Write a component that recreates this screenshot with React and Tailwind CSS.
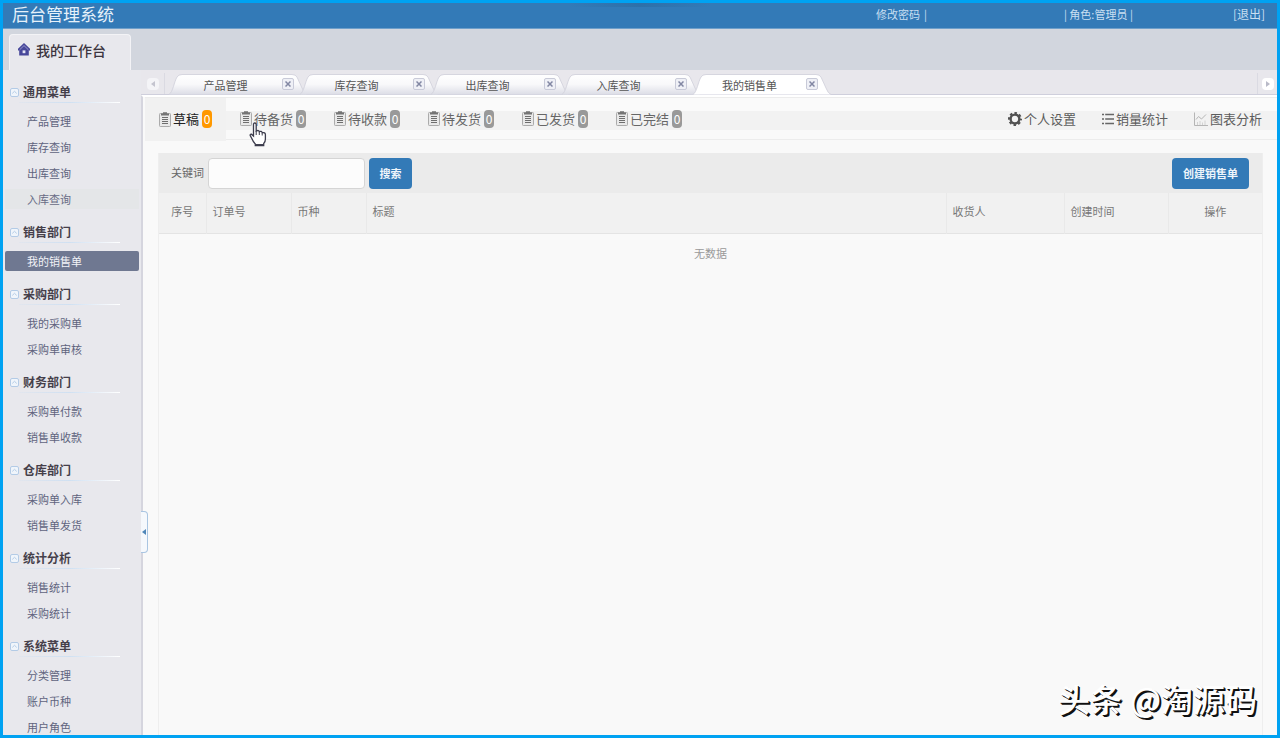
import React from "react";

const MENU = [
  { title: "通用菜单", items: ["产品管理", "库存查询", "出库查询", "入库查询"] },
  { title: "销售部门", items: ["我的销售单"] },
  { title: "采购部门", items: ["我的采购单", "采购单审核"] },
  { title: "财务部门", items: ["采购单付款", "销售单收款"] },
  { title: "仓库部门", items: ["采购单入库", "销售单发货"] },
  { title: "统计分析", items: ["销售统计", "采购统计"] },
  { title: "系统菜单", items: ["分类管理", "账户币种", "用户角色"] },
];
const ACTIVE_ITEM = "我的销售单";
const HOVER_ITEM = "入库查询";

const PAGE_TABS = ["产品管理", "库存查询", "出库查询", "入库查询", "我的销售单"];
const STATUSES = ["草稿", "待备货", "待收款", "待发货", "已发货", "已完结"];

function HomeIcon() {
  return (
    <svg width="12" height="13" viewBox="0 0 12 13" aria-hidden="true">
      <path d="M6 0 L12 5.8 V7.4 H10.8 V12.5 H1.2 V7.4 H0 V5.8 Z" fill="#47479a" />
      <path d="M1.6 6.8 L6 2.6 L10.4 6.8" fill="none" stroke="#a9a9d6" strokeWidth="0.8" />
      <rect x="4.6" y="7.4" width="2.8" height="2.8" fill="#e4e4f4" />
    </svg>
  );
}

function CollapseIcon() {
  return (
    <svg width="9" height="9" viewBox="0 0 9 9" fill="none" stroke="#b3cbe6" aria-hidden="true">
      <rect x="0.5" y="0.5" width="8" height="8" rx="1.5" fill="#f0f5fb" />
      <path d="M2.3 5.4 L4.5 3.3 L6.7 5.4" />
    </svg>
  );
}

function ClipboardIcon() {
  return (
    <svg width="12" height="15" viewBox="0 0 12 15" aria-hidden="true">
      <rect x="0.5" y="1.5" width="11" height="13" rx="0.8" fill="#e9e9e9" stroke="#ababab" />
      <path d="M2 1.5 H4 V0.3 H8 V1.5 H10 V3.6 H2 Z" fill="#747474" />
      <path d="M3 5.5H9M3 7.5H9M3 9.5H9M3 11.5H9" stroke="#6e6e6e" />
    </svg>
  );
}

function GearIcon() {
  return (
    <svg width="14" height="14" viewBox="0 0 14 14" fill="none" stroke="#505050" aria-hidden="true">
      <circle cx="7" cy="7" r="4.4" strokeWidth="2.4" />
      <circle cx="7" cy="7" r="6" strokeWidth="2" strokeDasharray="2.5 2.21" strokeDashoffset="1.25" />
    </svg>
  );
}

function ListIcon() {
  return (
    <svg width="12" height="12" viewBox="0 0 12 12" aria-hidden="true">
      <path d="M0 1.5H2M0 6H2M0 10.5H2M3.2 1.5H12M3.2 6H12M3.2 10.5H12" stroke="#666" strokeWidth="1.4" />
    </svg>
  );
}

function ChartIcon() {
  return (
    <svg width="14" height="14" viewBox="0 0 14 14" fill="none" stroke="#b5b5b5" aria-hidden="true">
      <path d="M0.5 0.5V13.5H14" />
      <path d="M2 7.5 L4.5 4.5 L7.5 7 L12 2.5" />
      <path d="M3.5 13V10M6 13V9M8.5 13V10.5M11 13V8.5" stroke="#d2d2d2" />
    </svg>
  );
}

function TabShape({ active }) {
  return (
    <svg
      className="pointer-events-none absolute -left-0.5 top-0"
      width="138"
      height="21"
      viewBox="0 0 138 21"
      aria-hidden="true"
    >
      <defs>
        <linearGradient id="tabFill" x1="0" y1="0" x2="0" y2="1">
          <stop offset="0" stopColor="#ffffff" />
          <stop offset="0.5" stopColor="#f8f8fa" />
          <stop offset="1" stopColor="#dcdde6" />
        </linearGradient>
      </defs>
      <path
        d="M0 20.5 C4 18 5 8 8 3 Q9.5 0.5 13 0.5 H123 Q126.5 0.5 128 3 L133 14 Q135 19.5 138 20.5 Z"
        fill={active ? "#ffffff" : "url(#tabFill)"}
      />
      <path
        d="M0 20.5 C4 18 5 8 8 3 Q9.5 0.5 13 0.5 H123 Q126.5 0.5 128 3 L133 14 Q135 19.5 138 20.5"
        fill="none"
        stroke="#d2d2dc"
        strokeWidth="0.9"
      />
    </svg>
  );
}

function PageTab({ label, active }) {
  return (
    <div className="relative flex h-[21px] w-[131px] shrink-0 items-center">
      <TabShape active={active} />
      <button
        type="button"
        role="tab"
        aria-selected={active}
        className="relative flex-1 pr-0.5 text-center text-[11px] leading-5 text-[#555]"
      >
        {label}
      </button>
      <button
        type="button"
        aria-label={`关闭 ${label}`}
        className="relative mb-0.5 mr-2 flex h-3 w-3 items-center justify-center rounded-xs border border-[#c8cad8] bg-[#eff0f6]"
      >
        <svg width="6" height="6" viewBox="0 0 6 6" stroke="#8287a3" strokeWidth="1.5" aria-hidden="true">
          <path d="M0.5 0.5L5.5 5.5M5.5 0.5L0.5 5.5" />
        </svg>
      </button>
    </div>
  );
}

function MenuGroup({ title, items }) {
  return (
    <section className="pb-px">
      <h2 className="pt-[9px] text-xs font-bold leading-5 text-[#453f4a]">
        <button type="button" className="flex h-5 items-center gap-1 pl-[7px]">
          <CollapseIcon />
          {title}
        </button>
      </h2>
      <div className="mb-[5px] ml-4 mr-5 h-px bg-linear-to-r from-[#e2e6ee] via-[#cfe0f2] to-white" />
      <ul>
        {items.map((item) => (
          <li key={item} className="py-[3px]">
            <a
              href="#"
              className={
                item === ACTIVE_ITEM
                  ? "ml-0.5 mr-px block h-5 rounded-xs bg-[#6f7891] pl-[22px] text-[11px] leading-5 text-[#f2f3f7]"
                  : item === HOVER_ITEM
                  ? "ml-0.5 mr-px block h-5 bg-[#e4e6e8] pl-[22px] text-[11px] leading-5 text-[#686c85]"
                  : "ml-0.5 mr-px block h-5 pl-[22px] text-[11px] leading-5 text-[#60647e]"
              }
            >
              {item}
            </a>
          </li>
        ))}
      </ul>
    </section>
  );
}

function StatusTab({ label, active }) {
  return (
    <button
      type="button"
      className={
        active
          ? "flex h-[42px] items-center px-3.5 text-[13px] text-[#222]"
          : "flex h-[42px] items-center px-3.5 text-[13px] text-[#666]"
      }
    >
      <ClipboardIcon />
      <span className="ml-0.5">{label}</span>
      <span
        className={
          active
            ? "ml-[3px] w-2.5 rounded-sm bg-[#ff9800] text-center text-xs leading-[18px] text-white"
            : "ml-[3px] w-2.5 rounded-sm bg-[#999] text-center text-xs leading-[18px] text-white"
        }
      >
        0
      </span>
    </button>
  );
}

function ToolLink({ icon, label }) {
  return (
    <a href="#" className="flex items-center gap-0.5 text-[13px] text-[#5c5c5c]">
      {icon}
      {label}
    </a>
  );
}

function HandCursor() {
  return (
    <svg
      className="pointer-events-none absolute left-[106px] top-[25px]"
      width="18"
      height="25"
      viewBox="0 0 18 25"
      aria-hidden="true"
    >
      <path
        d="M4.5 2.5 Q4.5 1 5.8 1 Q7.2 1 7.2 2.5 V9 Q9.8 7.8 10.3 9.6 Q12.7 8.7 13.2 10.7 Q16.4 10 16.4 12.8 V17 Q16.4 20 14.7 21.5 V23.5 H6.3 V22 Q4 19.5 2.8 16.5 L1.2 13.6 Q1 11.9 2.4 12.2 L4.5 14 Z"
        fill="#fff"
        stroke="#3d3d4d"
        strokeWidth="1.3"
      />
      <path d="M7.2 9V13M10.3 10V13M13.2 11V13.5" stroke="#3d3d4d" />
      <path d="M6.5 22.8H14.5" stroke="#3d3d4d" strokeWidth="1.5" />
    </svg>
  );
}

const TH = "border-r border-[#e9e9e9] pb-1 font-normal";

export default function App() {
  return (
    <div className="relative flex h-screen flex-col overflow-hidden border-[3px] border-[#00a2f2] bg-[#f9f9f9] font-['Noto_Sans_CJK_SC','Liberation_Sans',sans-serif]">
      <header className="flex h-[26px] shrink-0 items-center border-b border-[#6f9fca] bg-[#337ab7] pb-[3px] pl-[9px] pr-3 text-[11px] text-[#c9dff2]">
        <h1 className="flex-1 text-[17px] leading-5 text-[#e6f1fa]">后台管理系统</h1>
        <a href="#">修改密码</a>
        <span className="ml-1 mr-[137px]">|</span>
        <span>| 角色:管理员 |</span>
        <a href="#" className="ml-[100px] text-xs">[退出]</a>
      </header>
      <div className="pointer-events-none absolute left-1/2 top-0 h-1 w-36 -translate-x-1/2 rounded-b-full bg-linear-to-r from-[#337ab7] via-[#2e70a9] to-[#337ab7]" />

      <div className="flex h-[41px] shrink-0 items-end bg-[#d2d6de] pl-[6px]">
        <a
          href="#"
          className="flex h-9 w-[122px] items-center gap-1.5 rounded-t-sm border-x border-t border-[#f3f3f6] bg-[#e8e8ed] pb-1.5 pl-2 text-sm font-medium text-[#3c3540]"
        >
          <HomeIcon />
          我的工作台
        </a>
      </div>

      <div className="flex min-h-0 flex-1">
        <aside className="relative w-[137px] shrink-0 bg-[#e8e8ed] pt-[3px]">
          <nav className="h-full overflow-hidden">
            {MENU.map((group) => (
              <MenuGroup key={group.title} title={group.title} items={group.items} />
            ))}
          </nav>
          <button
            type="button"
            aria-label="收起菜单"
            className="absolute -right-2 top-[441px] z-10 flex h-[42px] w-[7px] items-center justify-center rounded-r-sm border border-l-0 border-[#a9c5e2] bg-[#f5f8fc]"
          >
            <svg width="4" height="6" viewBox="0 0 4 6" aria-hidden="true">
              <path d="M4 0V6L0 3Z" fill="#4f86b8" />
            </svg>
          </button>
        </aside>

        <main className="flex min-w-0 flex-1 flex-col bg-[#e8e8ed] pl-px">
          <div className="flex h-[25px] shrink-0 items-end border-b border-[#cfcfdc] bg-[#e8e7ec]">
            <div className="flex h-[21px] w-6 items-center justify-center border-r border-[#dadae2]">
              <button type="button" aria-label="向左滚动" className="flex h-3 w-3 items-center justify-center rounded-sm bg-[#f4f4f7]">
                <svg width="4" height="6" viewBox="0 0 4 6" aria-hidden="true">
                  <path d="M4 0V6L0 3Z" fill="#c4c4cf" />
                </svg>
              </button>
            </div>
            <div role="tablist" className="-mb-px flex min-w-0 flex-1 pl-1.5">
              {PAGE_TABS.map((label) => (
                <PageTab key={label} label={label} active={label === ACTIVE_ITEM} />
              ))}
            </div>
            <div className="flex h-[21px] w-5 items-center justify-center border-l border-[#dadae2]">
              <button type="button" aria-label="向右滚动" className="flex h-3 w-3 items-center justify-center rounded-sm bg-white">
                <svg width="4" height="6" viewBox="0 0 4 6" aria-hidden="true">
                  <path d="M0 0V6L4 3Z" fill="#b9bac8" />
                </svg>
              </button>
            </div>
          </div>

          <div className="relative flex min-h-0 flex-1 flex-col border-l-2 border-t-2 border-l-[#d5d5de] border-t-white bg-[#f9f9f9] pl-0.5">
            <div className="flex h-[44px] shrink-0 items-stretch border-t border-[#ececec]">
              <div className="flex bg-[#f1f1f1]">
                <StatusTab label={STATUSES[0]} active />
              </div>
              <div className="flex h-[42px] flex-1 items-center border-b border-[#ececec] bg-[linear-gradient(#fafafa_13px,#f2f2f2_13px,#f2f2f2_32px,#f9f9f9_32px)]">
                {STATUSES.slice(1).map((label) => (
                  <StatusTab key={label} label={label} active={false} />
                ))}
                <div className="ml-auto flex gap-[26px] pr-[15px]">
                  <ToolLink icon={<GearIcon />} label="个人设置" />
                  <ToolLink icon={<ListIcon />} label="销量统计" />
                  <ToolLink icon={<ChartIcon />} label="图表分析" />
                </div>
              </div>
            </div>
            <HandCursor />

            <section className="ml-[13px] mr-3.5 mt-3 flex min-h-0 flex-1 flex-col border-x border-[#eee]">
              <form className="flex h-10 shrink-0 items-center bg-[#ebebeb] pl-3 pr-[13px]" onSubmit={(e) => e.preventDefault()}>
                <label htmlFor="keyword" className="w-[37px] pb-0.5 text-[11px] text-[#666]">
                  关键词
                </label>
                <input
                  id="keyword"
                  type="text"
                  className="h-[31px] w-[157px] rounded-sm border border-[#d5d5d5] bg-[#fcfcfc] px-2 text-xs"
                />
                <button type="submit" className="ml-1 h-[31px] w-[43px] rounded-sm bg-[#337ab7] text-[11px] font-bold text-[#eef5fb]">
                  搜索
                </button>
                <button type="button" className="ml-auto h-[31px] w-[77px] rounded-sm bg-[#337ab7] text-[11px] font-bold text-[#eef5fb]">
                  创建销售单
                </button>
              </form>
              <table className="w-full table-fixed border-collapse text-[11px] text-[#777]">
                <colgroup>
                  <col className="w-[47px]" />
                  <col className="w-[85px]" />
                  <col className="w-[75px]" />
                  <col />
                  <col className="w-[118px]" />
                  <col className="w-[104px]" />
                  <col className="w-[94px]" />
                </colgroup>
                <thead>
                  <tr className="h-10 border-b border-[#e4e4e4] bg-[#f1f1f1] text-left">
                    <th className={`${TH} text-center`}>序号</th>
                    <th className={`${TH} pl-1.5`}>订单号</th>
                    <th className={`${TH} pl-1.5`}>币种</th>
                    <th className={`${TH} pl-1.5`}>标题</th>
                    <th className={`${TH} pl-1.5`}>收货人</th>
                    <th className={`${TH} pl-1.5`}>创建时间</th>
                    <th className="pb-1 text-center font-normal">操作</th>
                  </tr>
                </thead>
                <tbody>
                  <tr className="h-10">
                    <td colSpan={7} className="text-center text-[#999]">
                      无数据
                    </td>
                  </tr>
                </tbody>
              </table>
            </section>
          </div>
        </main>
      </div>

      <div className="pointer-events-none absolute bottom-3.5 right-5 flex gap-2 text-[32px] font-medium leading-[46px] text-white [text-shadow:1px_1px_0_#111,2px_2px_0_#111]">
        <span>头条</span>
        <span>@淘源码</span>
      </div>
    </div>
  );
}
